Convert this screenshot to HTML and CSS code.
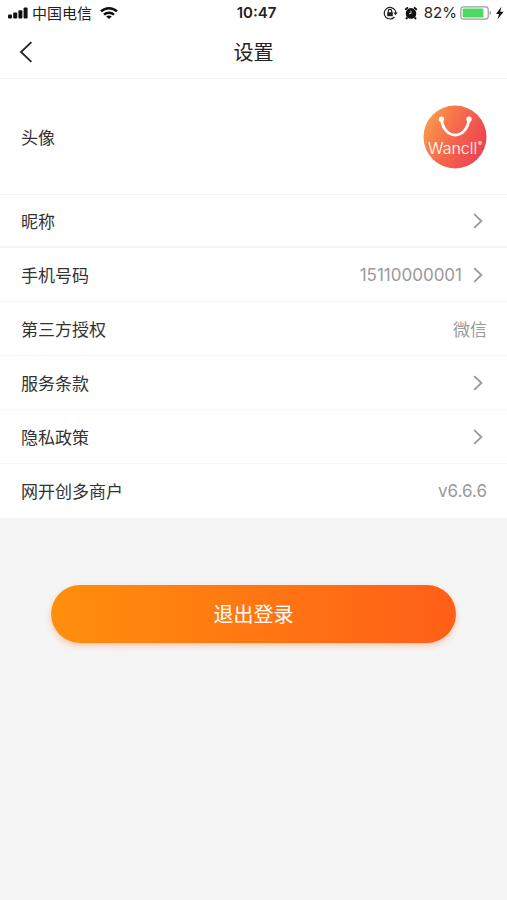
FILE: index.html
```
<!DOCTYPE html>
<html lang="zh-CN">
<head>
<meta charset="utf-8">
<meta name="viewport" content="width=device-width, initial-scale=1">
<title>设置</title>
<link rel="stylesheet" href="styles.css">
</head>
<body>
<div class="status">
  <div class="status-group">
    <svg width="20" height="12" viewBox="0 0 20 12" aria-hidden="true"><g fill="#111"><rect x="0" y="7.5" width="4" height="4" rx="1"/><rect x="5.2" y="5.5" width="4" height="6" rx="1"/><rect x="10.4" y="3.2" width="4" height="8.3" rx="1"/><rect x="15.6" y="0.5" width="4" height="11" rx="1"/></g></svg>
    <span class="carrier">中国电信</span>
    <svg class="wifi" width="18" height="12" viewBox="0 0 18 12" fill="none" stroke="#111" stroke-width="2.4" aria-hidden="true"><path d="M1 4.4a11.6 11.6 0 0 1 16 0"/><path d="M4 7.7a7.3 7.3 0 0 1 10 0"/><path d="M9 12 6.2 9.6a3.900 3.900 0 0 1 5.600 0z" fill="#111" stroke="none"/></svg>
  </div>
  <span class="time">10:47</span>
  <div class="status-group status-end">
    <svg width="15" height="14" viewBox="0 0 15 14" fill="none" stroke="#222" stroke-width="1.2" aria-hidden="true"><path d="M12.2 4.6A5.8 5.8 0 1 0 11.4 11"/><path d="M12.6 4.4v3.4"/><path d="M10.4 6.6h4.2l-2.1 2.6z" fill="#222" stroke="none"/><rect x="4.2" y="6.2" width="5.6" height="4" fill="#222" stroke="none"/><path d="M5.3 6.4V5a1.7 1.7 0 0 1 3.4 0v1.4"/></svg>
    <svg class="alarm" width="14" height="14" viewBox="0 0 14 14" aria-hidden="true"><circle cx="7" cy="7.4" r="5.3" fill="#111"/><path d="M1.2 3.8 4 1.4M12.8 3.8 10 1.4M3.4 11.4 2 13M10.6 11.4 12 13" stroke="#111" stroke-width="1.9"/><path d="M7 4.6v3H5" fill="none" stroke="#ddd" stroke-width=".9"/></svg>
    <span class="percent">82%</span>
    <svg width="32" height="14" viewBox="0 0 32 14" aria-hidden="true"><rect x=".8" y=".8" width="27.4" height="12.4" rx="2.6" fill="#fff" stroke="#9b9b9b" stroke-width="1.2"/><rect x="2.6" y="2.6" width="20.8" height="8.8" rx="1" fill="#4cd964"/><path d="M29.6 4.8c2 .6 2 3.8 0 4.4z" fill="#9b9b9b"/></svg>
    <svg class="bolt" width="10" height="14" viewBox="0 0 10 14" aria-hidden="true"><path d="M6.400 .8 1 7.900h3L2.600 13.200l6-7.400H5.200z" fill="#111"/></svg>
  </div>
</div>
<header class="nav">
  <button class="back" type="button" aria-label="返回"><svg width="14" height="22" viewBox="0 0 14 22" fill="none" stroke="#222" stroke-width="1.8"><path d="M12.4 1.2 2 11l10.4 9.8"/></svg></button>
  <h1>设置</h1>
</header>
<main>
  <div class="list">
    <a class="row avatar-row" href="#avatar">
      <span>头像</span>
      <svg class="avatar" width="64" height="64" viewBox="0 0 64 64" role="img" aria-label="Wancll">
        <defs><linearGradient id="logo" x1="0" y1=".25" x2="1" y2=".75"><stop offset="0" stop-color="#fb9a4b"/><stop offset=".5" stop-color="#f5654c"/><stop offset="1" stop-color="#ec3f52"/></linearGradient></defs>
        <circle cx="32" cy="32" r="31.5" fill="url(#logo)"/>
        <path d="M18.6 15c1 8.4 6.4 15 13.6 15s12.600-6.600 13.600-15" fill="none" stroke="#fff" stroke-width="2.8"/>
        <circle cx="18.4" cy="14.2" r="2.7" fill="#fff"/><circle cx="46" cy="14.2" r="2.7" fill="#fff"/>
        <text class="logo-text" x="5" y="49">Wancll</text>
        <text class="logo-mark" x="55" y="41">®</text>
      </svg>
    </a>
    <a class="row nickname" href="#nickname"><span>昵称</span><svg class="chevron" width="10" height="16" viewBox="0 0 10 16"><path d="m1.2 1.2 7.2 6.8-7.2 6.8"/></svg></a>
    <a class="row" href="#phone"><span>手机号码</span><span class="value number">15110000001</span><svg class="chevron" width="10" height="16" viewBox="0 0 10 16"><path d="m1.2 1.2 7.2 6.8-7.2 6.8"/></svg></a>
    <a class="row" href="#auth"><span>第三方授权</span><span class="value">微信</span></a>
    <a class="row" href="#terms"><span>服务条款</span><svg class="chevron" width="10" height="16" viewBox="0 0 10 16"><path d="m1.2 1.2 7.2 6.8-7.2 6.8"/></svg></a>
    <a class="row" href="#privacy"><span>隐私政策</span><svg class="chevron" width="10" height="16" viewBox="0 0 10 16"><path d="m1.2 1.2 7.2 6.8-7.2 6.8"/></svg></a>
    <div class="row"><span>网开创多商户</span><span class="value number">v6.6.6</span></div>
  </div>
  <button class="logout" type="button">退出登录</button>
</main>
</body>
</html>
```
FILE: styles.css
```
* {
  box-sizing: border-box;
}

body {
  margin: 0;
  min-height: 100vh;
  background: #f5f5f5;
  color: #333;
  font: 17px/24px "Noto Sans CJK SC", sans-serif;
}

.status {
  display: grid;
  grid-template-columns: 1fr auto 1fr;
  align-items: center;
  height: 26px;
  padding: 0 2px 0 8px;
  background: #fff;
  color: #222;
}

.status-group {
  display: flex;
  align-items: center;
  gap: 4px;
}

.status-end {
  justify-content: flex-end;
  gap: 3px;
}

.carrier {
  font-size: 15px;
}

.wifi {
  margin-left: 4px;
}

.time {
  font: 600 15px/24px Inter, sans-serif;
}

.percent {
  font: 15px/24px Inter, sans-serif;
}

.alarm {
  margin: 0 3px;
}

.nav {
  display: grid;
  grid-template-columns: 40px 1fr 40px;
  align-items: center;
  height: 53px;
  background: #fff;
  border-bottom: 1px solid #f5f5f5;
}

.back {
  display: flex;
  justify-content: flex-end;
  padding: 0 7px 0 0;
  border: 0;
  background: none;
}

h1 {
  margin: 0;
  color: #222;
  font-size: 20px;
  font-weight: 400;
  text-align: center;
}

.list {
  background: #fff;
}

.row {
  display: flex;
  align-items: center;
  min-height: 54px;
  padding: 0 20px 0 21px;
  border-bottom: 1px solid #f7f7f7;
  color: #333;
  text-decoration: none;
}

.row:last-child {
  border-bottom: 0;
}

.avatar-row {
  min-height: 116px;
  border-bottom-color: #f3f3f3;
}

.nickname {
  min-height: 53px;
  border-bottom: 2px solid #f5f5f5;
}

.avatar,
.value,
.chevron {
  margin-left: auto;
}

.chevron {
  margin-right: 4px;
  fill: none;
  stroke: #999;
  stroke-width: 1.8;
}

.value {
  color: #999;
}

.value + .chevron {
  margin-left: 11px;
}

.number {
  font-family: Inter, sans-serif;
}

.logo-text {
  fill: #fff;
  font: 300 16px Inter, sans-serif;
}

.logo-mark {
  fill: #fff;
  font: 6px Inter, sans-serif;
}

.logout {
  display: block;
  width: 80%;
  height: 58px;
  margin: 67px auto 0;
  border: 0;
  border-radius: 29px;
  background: linear-gradient(90deg, #ff8f0c, #ff5f18);
  box-shadow: 0 3px 6px rgba(255, 96, 24, 0.3);
  color: #fff;
  font: 20px/24px "Noto Sans CJK SC", sans-serif;
}
```
